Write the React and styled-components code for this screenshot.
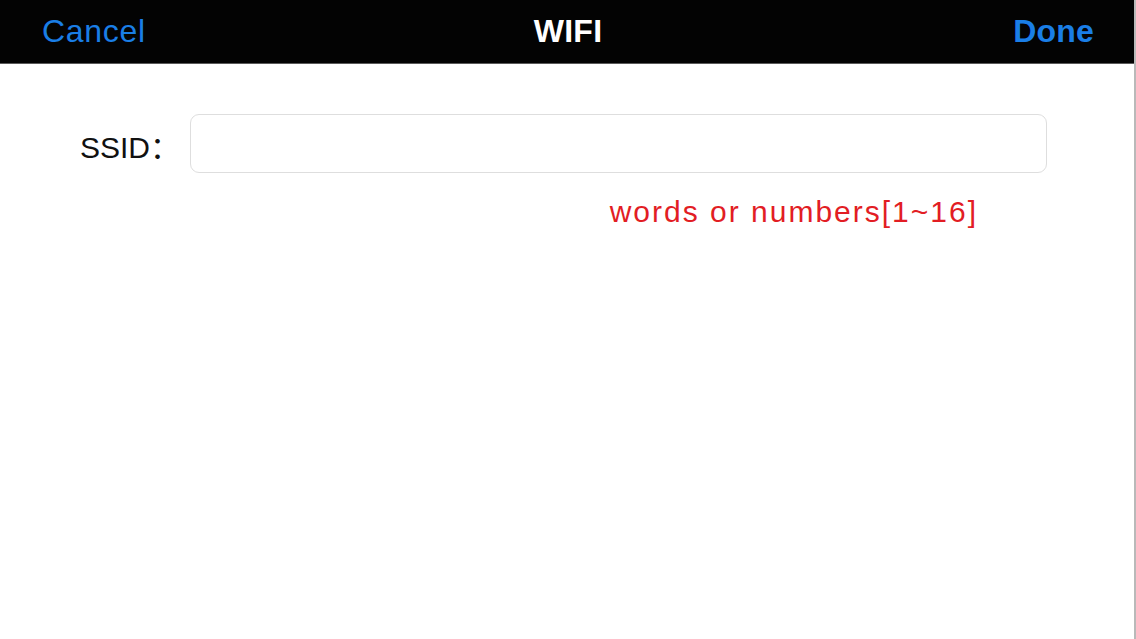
import React from 'react';
import styled, { createGlobalStyle } from 'styled-components';

const GlobalStyle = createGlobalStyle`
  html, body {
    margin: 0;
    padding: 0;
    background: #ffffff;
  }
  body {
    font-family: "Liberation Sans", Arial, "Noto Sans CJK SC", sans-serif;
  }
`;

const Screen = styled.div`
  width: 1136px;
  height: 639px;
  display: flex;
  flex-direction: column;
  background: #ffffff;
  border-right: 2px solid #b9b9b9;
  box-sizing: border-box;
  overflow: hidden;
`;

const NavBar = styled.header`
  height: 63px;
  flex-shrink: 0;
  display: grid;
  grid-template-columns: 1fr auto 1fr;
  align-items: center;
  padding: 0 40px 0 42px;
  background: #030303;
  border-bottom: 1px solid #5a5a5a;
`;

const NavButton = styled.button`
  justify-self: ${({ $align }) => ($align === 'right' ? 'end' : 'start')};
  background: none;
  border: none;
  padding: 0;
  font-family: "Liberation Sans", Arial, sans-serif;
  font-size: 32px;
  font-weight: ${({ $bold }) => ($bold ? 700 : 400)};
  letter-spacing: ${({ $bold }) => ($bold ? '0.2px' : '0.7px')};
  color: #1a7ee6;
  cursor: pointer;
`;

const Title = styled.h1`
  margin: 0;
  font-size: 32px;
  font-weight: 700;
  color: #ffffff;
  letter-spacing: 0.3px;
`;

const Body = styled.main`
  display: flex;
  flex-direction: column;
  padding-top: 50px;
`;

const FieldRow = styled.div`
  display: flex;
  align-items: center;
  padding-left: 80px;
`;

const Label = styled.label`
  width: 110px;
  padding-top: 2px;
  font-size: 30px;
  color: #111111;
  font-family: "Liberation Sans", Arial, "Noto Sans CJK SC", sans-serif;
`;

const TextField = styled.input`
  width: 857px;
  height: 59px;
  box-sizing: border-box;
  border: 1px solid #dedede;
  border-radius: 9px;
  background: #ffffff;
  padding: 0 14px;
  font-family: "Liberation Sans", Arial, sans-serif;
  font-size: 26px;
  outline: none;
`;

const HintRow = styled.div`
  display: flex;
  justify-content: flex-end;
  padding-right: 156px;
  margin-top: 22px;
`;

const Hint = styled.span`
  font-size: 30px;
  letter-spacing: 2px;
  color: #e21d24;
`;

export default function App() {
  return (
    <>
      <GlobalStyle />
      <Screen>
        <NavBar>
          <NavButton>Cancel</NavButton>
          <Title>WIFI</Title>
          <NavButton $align="right" $bold>Done</NavButton>
        </NavBar>
        <Body>
          <FieldRow>
            <Label htmlFor="ssid">SSID：</Label>
            <TextField id="ssid" type="text" />
          </FieldRow>
          <HintRow>
            <Hint>words or numbers[1~16]</Hint>
          </HintRow>
        </Body>
      </Screen>
    </>
  );
}
